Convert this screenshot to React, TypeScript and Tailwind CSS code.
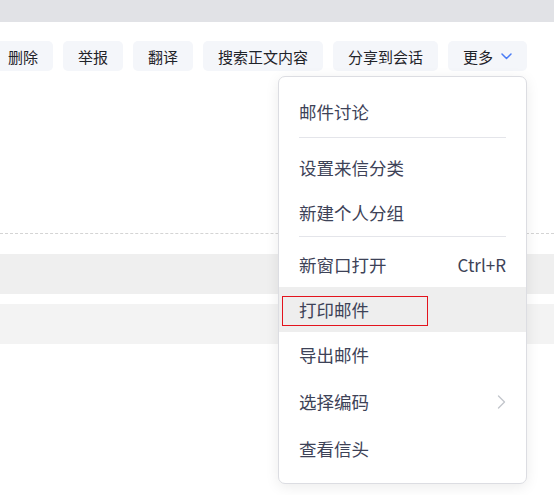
import React from "react";

const font = { fontFamily: '"Noto Sans CJK SC", "Noto Sans", sans-serif' };

function ToolBtn({ label, children }: { label: string; children?: React.ReactNode }) {
  return (
    <div className="h-[30px] shrink-0 flex items-center px-[15px] rounded-[5px] bg-[#f4f6fa] text-[15px] text-[#1f2329] leading-none">
      {label}
      {children}
    </div>
  );
}

function Item({ label, right, active, h = "h-[45px]" }: { label: string; right?: React.ReactNode; active?: boolean; h?: string }) {
  return (
    <div className={`${h} flex items-center justify-between pl-[20px] pr-[20px] ${active ? "bg-[#eeeeee]" : ""}`}>
      <span className="text-[17.5px] leading-none text-[#3d4257]">{label}</span>
      {right}
    </div>
  );
}

export default function App() {
  return (
    <div className="relative w-[554px] h-[495px] overflow-hidden bg-white" style={font}>
      <div className="h-[22px] bg-[#e1e2e6]" />
      <div className="mt-[19px] ml-[-7px] flex gap-[10px]">
        <ToolBtn label="删除" />
        <ToolBtn label="举报" />
        <ToolBtn label="翻译" />
        <ToolBtn label="搜索正文内容" />
        <ToolBtn label="分享到会话" />
        <ToolBtn label="更多">
          <svg className="ml-[8px]" width="11" height="7" viewBox="0 0 11 7" fill="none">
            <polyline points="1,1 5.5,5.5 10,1" stroke="#4a7cf6" strokeWidth="1.5" strokeLinecap="round" strokeLinejoin="round" />
          </svg>
        </ToolBtn>
      </div>
      <div className="mt-[162px] border-t border-dashed border-[#d4d4d4]" />
      <div className="mt-[20px] h-[40px] bg-[#efefef]" />
      <div className="mt-[10px] h-[40px] bg-[#f3f3f3]" />

      <div className="absolute left-[526px] top-[159px] w-[1px] h-[3px] bg-[#777]" />

      <div className="absolute left-[278px] top-[76px] w-[249px] h-[408px] bg-white border border-[#dcdde2] rounded-[7px] shadow-[0_3px_14px_rgba(0,0,0,0.08)] pt-[12px] pb-[12px]">
        <Item label="邮件讨论" h="h-[46px]" />
        <div className="mx-[20px] my-[2px] h-px bg-[#e4e5ea]" />
        <div className="mt-[7px]" />
        <Item label="设置来信分类" />
        <Item label="新建个人分组" />
        <div className="mx-[20px] mt-[1px] mb-[5px] h-px bg-[#e4e5ea]" />
        <Item label="新窗口打开" right={<span className="text-[17px] leading-none text-[#3d4257]">Ctrl+R</span>} />
        <div className="relative">
          <Item label="打印邮件" active />
          <div className="absolute left-[3px] top-[9px] w-[146px] h-[30px] border border-[#e3141d]" />
        </div>
        <Item label="导出邮件" h="h-[46px]" />
        <Item
          label="选择编码"
          h="h-[47px]"
          right={
            <svg width="9" height="14" viewBox="0 0 9 14" fill="none">
              <polyline points="1.5,1 7.5,7 1.5,13" stroke="#c3c6cc" strokeWidth="1.4" strokeLinecap="round" strokeLinejoin="round" />
            </svg>
          }
        />
        <Item label="查看信头" h="h-[48px]" />
      </div>
    </div>
  );
}
